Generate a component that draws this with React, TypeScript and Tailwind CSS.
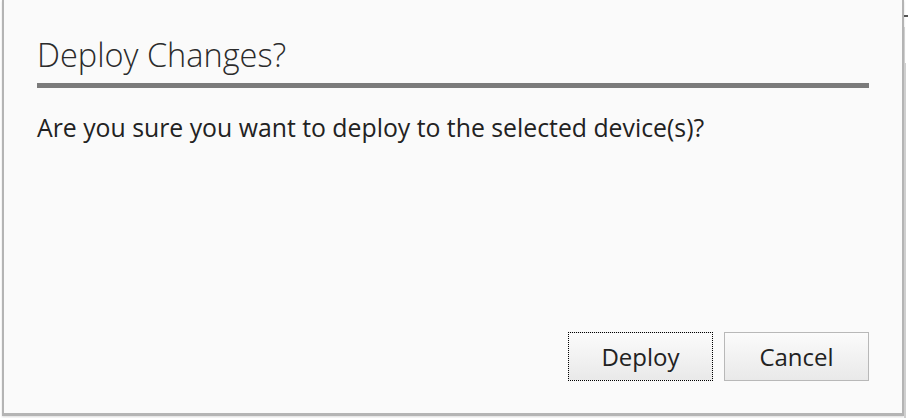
import React from "react";

const App = (): JSX.Element => {
  return (
    <div className="w-[910px] h-[418px] bg-white flex font-['Open_Sans',sans-serif]">
      <div className="ml-[2px] w-[902px] h-[416px] bg-[#fafafa] border-l-2 border-r-2 border-b-[3px] border-[#b4b4b4] shadow-[0_1px_2px_rgba(0,0,0,0.15)] flex flex-col px-[33px]">
        {/* header */}
        <div className="pt-[33px]">
          <h2 className="text-[32.5px] leading-[44px] font-light text-[#2b2b2b]">Deploy Changes?</h2>
          <div className="mt-[6px] h-[5px] bg-[#7b7b7b] w-full" />
        </div>

        {/* body */}
        <p className="mt-[22px] text-[24.8px] leading-[34px] text-[#222222]">
          Are you sure you want to deploy to the selected device(s)?
        </p>

        {/* footer */}
        <div className="mt-auto mb-[32px] flex justify-end gap-[11px]">
          <button className="w-[145px] h-[49px] border border-dotted border-black bg-gradient-to-b from-[#fbfbfb] to-[#e9e9e9] text-[24px] text-[#222222]">
            Deploy
          </button>
          <button className="w-[145px] h-[49px] border border-[#b8b8b8] bg-gradient-to-b from-[#fbfbfb] to-[#e9e9e9] text-[24px] text-[#222222]">
            Cancel
          </button>
        </div>
      </div>

      {/* page behind, right edge */}
      <div className="flex-1 flex flex-col">
        <div className="h-[15px]" />
        <div className="h-[2px] w-[4px] bg-[#555555]" />
        <div className="mt-[10px] h-[36px] border-l border-[#d0d0d0]" />
        <div className="flex-1 border-l-2 border-[#cfcfcf]" />
      </div>
    </div>
  );
};

export default App;
